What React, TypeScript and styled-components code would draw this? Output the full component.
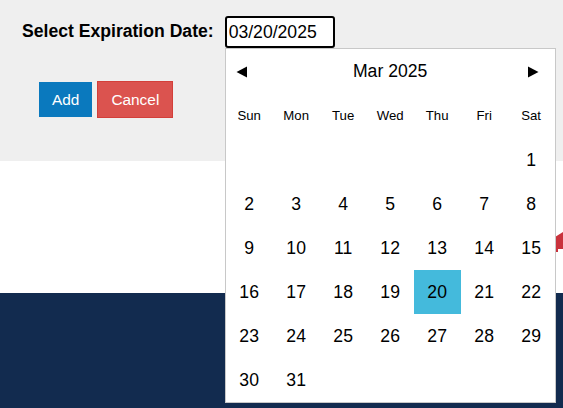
import React from "react";
import styled, { createGlobalStyle } from "styled-components";

const GlobalStyle = createGlobalStyle`
  html, body {
    margin: 0;
    padding: 0;
    background: #ffffff;
    font-family: "Liberation Sans", Arial, sans-serif;
  }
`;

const WEEKDAYS = ["Sun", "Mon", "Tue", "Wed", "Thu", "Fri", "Sat"];
const FIRST_WEEKDAY = 6;
const DAYS_IN_MONTH = 31;
const SELECTED_DAY = 20;

const App = () => {
  const cells: (number | null)[] = [];
  for (let i = 0; i < FIRST_WEEKDAY; i++) cells.push(null);
  for (let d = 1; d <= DAYS_IN_MONTH; d++) cells.push(d);

  return (
    <>
      <GlobalStyle />
      <S.Page>
        <S.FormPanel>
          <S.FieldRow>
            <S.Label htmlFor="expiration">Select Expiration Date:</S.Label>
            <S.PickerWrap>
              <S.DateInput id="expiration" value="03/20/2025" readOnly />
              <S.Popup>
                <S.PopupHeader>
                  <S.NavButton aria-label="Previous month">
                    <svg width="12" height="12" viewBox="0 0 12 12">
                      <polygon points="11,0.5 11,11.5 0.5,6" fill="#000" />
                    </svg>
                  </S.NavButton>
                  <S.MonthTitle>Mar 2025</S.MonthTitle>
                  <S.NavButton aria-label="Next month">
                    <svg width="12" height="12" viewBox="0 0 12 12">
                      <polygon points="1,0.5 1,11.5 11.5,6" fill="#000" />
                    </svg>
                  </S.NavButton>
                </S.PopupHeader>
                <S.DayGrid>
                  {WEEKDAYS.map((w) => (
                    <S.WeekdayCell key={w}>{w}</S.WeekdayCell>
                  ))}
                  {cells.map((d, i) => (
                    <S.DayCell key={i} $selected={d === SELECTED_DAY}>
                      {d ?? ""}
                    </S.DayCell>
                  ))}
                </S.DayGrid>
              </S.Popup>
            </S.PickerWrap>
          </S.FieldRow>
          <S.ButtonRow>
            <S.Button $variant="add">Add</S.Button>
            <S.Button $variant="cancel">Cancel</S.Button>
          </S.ButtonRow>
        </S.FormPanel>
        <S.WhiteArea>
          <S.RedMark width="8" height="20" viewBox="0 0 8 20">
            <polygon points="0,5 8,0 8,17 3,17 3,20 0,20" fill="#c9323c" />
          </S.RedMark>
        </S.WhiteArea>
        <S.FooterBand />
      </S.Page>
    </>
  );
};

export default App;

const S = {
  Page: styled.div`
    width: 563px;
    height: 408px;
    overflow: hidden;
    display: flex;
    flex-direction: column;
  `,
  FormPanel: styled.div`
    height: 161px;
    box-sizing: border-box;
    padding: 16px 0 0 22px;
    background: #efefef;
    position: relative;
    z-index: 2;
  `,
  FieldRow: styled.div`
    display: flex;
    align-items: center;
    gap: 11px;
  `,
  Label: styled.label`
    font-size: 17.6px;
    font-weight: bold;
    color: #000;
    margin-top: -2px;
  `,
  PickerWrap: styled.div`
    position: relative;
  `,
  DateInput: styled.input`
    width: 110px;
    height: 32px;
    box-sizing: border-box;
    border: 2px solid #000;
    border-radius: 3px;
    padding: 0 2px;
    font-family: "Liberation Sans", Arial, sans-serif;
    font-size: 17.6px;
    color: #000;
    background: #fff;
    outline: none;
  `,
  Popup: styled.div`
    position: absolute;
    top: 32px;
    left: 0;
    width: 329px;
    border: 1px solid #c8c8c8;
    background: #fff;
  `,
  PopupHeader: styled.div`
    height: 45px;
    display: flex;
    align-items: center;
    justify-content: space-between;
    padding: 0 16px 0 10px;
  `,
  NavButton: styled.span`
    display: flex;
    align-items: center;
    cursor: pointer;
  `,
  MonthTitle: styled.span`
    font-size: 17.6px;
    color: #000;
    margin-left: 6px;
  `,
  DayGrid: styled.div`
    display: grid;
    grid-template-columns: repeat(7, 47px);
    grid-auto-rows: 44px;
  `,
  WeekdayCell: styled.div`
    display: flex;
    align-items: center;
    justify-content: center;
    font-size: 13.2px;
    color: #000;
    padding-bottom: 2px;
  `,
  DayCell: styled.div<{ $selected?: boolean }>`
    display: flex;
    align-items: center;
    justify-content: center;
    font-size: 17.6px;
    color: #000;
    background: ${({ $selected }) => ($selected ? "#44badc" : "transparent")};
  `,
  ButtonRow: styled.div`
    display: flex;
    align-items: center;
    gap: 5px;
    margin: 33px 0 0 17px;
  `,
  Button: styled.button<{ $variant: "add" | "cancel" }>`
    font-family: "Liberation Sans", Arial, sans-serif;
    font-size: 15.4px;
    color: #fff;
    cursor: pointer;
    border-radius: 0;
    padding: 0 ${({ $variant }) => ($variant === "add" ? "12px" : "13px")};
    height: ${({ $variant }) => ($variant === "add" ? "35px" : "37px")};
    background: ${({ $variant }) => ($variant === "add" ? "#0a79be" : "#db534f")};
    border: 1px solid
      ${({ $variant }) => ($variant === "add" ? "#0a79be" : "#d33f3a")};
  `,
  WhiteArea: styled.div`
    height: 132px;
    background: #fff;
    display: flex;
    justify-content: flex-end;
    align-items: flex-start;
  `,
  RedMark: styled.svg`
    margin-top: 71px;
  `,
  FooterBand: styled.div`
    flex: 1;
    background: #122b4f;
  `,
};
